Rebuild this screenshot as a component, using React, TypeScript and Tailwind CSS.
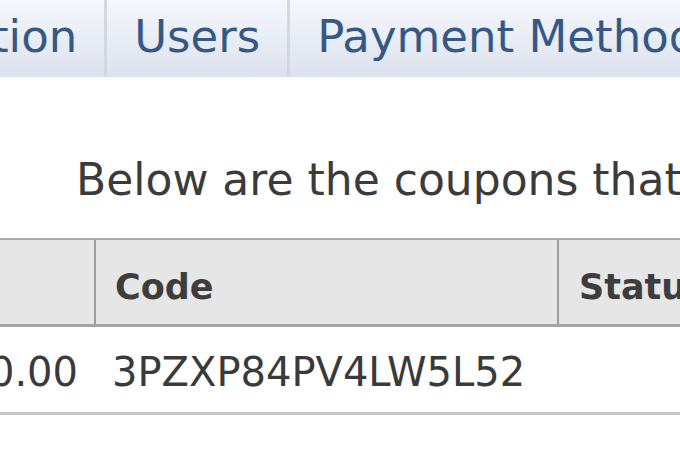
import React from 'react';

const tabs = ['Configuration', 'Users', 'Payment Methods', 'Reports'];

export default function App() {
    return (
        <div className="w-[680px] h-[474px] overflow-hidden bg-white font-['DejaVu_Sans',Verdana,sans-serif]">
            {/* Tab strip, first tab scrolled off to the left */}
            <div className="flex h-[77px] bg-gradient-to-b from-[#f5f7fb] to-[#dce2ee] whitespace-nowrap">
                {tabs.map((tab, i) => (
                    <div
                        key={tab}
                        className={`flex items-center shrink-0 px-[27px] pb-[3px] border-r-[3px] border-[#d4d7dd] text-[45px] leading-[52px] text-[#365885] ${i === 0 ? '-ml-[255px]' : ''}`}
                    >
                        {tab}
                    </div>
                ))}
            </div>

            {/* Intro line */}
            <p className="mt-[77px] pl-[76px] whitespace-nowrap text-[44px] leading-[52px] text-[#3b3b3b]">
                Below are the coupons that are currently available.
            </p>

            {/* Coupon table */}
            <div className="mt-[32px] w-[900px]">
                <div className="flex h-[89px] border-t-2 border-b-[3px] border-t-[#a9a9a9] border-b-[#a3a3a3] bg-[#e6e6e6] text-[35px] font-bold leading-[41px] text-[#3d3d3d]">
                    <div className="w-[96px] border-r-2 border-[#9c9c9c]" />
                    <div className="w-[463px] pl-[19px] pt-[27px] border-r-2 border-[#9c9c9c]">Code</div>
                    <div className="flex-1 pl-[20px] pt-[27px]">Status</div>
                </div>
                <div className="flex h-[88px] border-b-[3px] border-[#c6c6c6] text-[40px] leading-[46px] text-[#3a3a3a] whitespace-nowrap">
                    <div className="w-[98px] flex justify-end pr-[20px] pt-[22px]">10.00</div>
                    <div className="w-[463px] pl-[14px] pt-[22px]">3PZXP84PV4LW5L52</div>
                    <div className="flex-1" />
                </div>
            </div>
        </div>
    );
}
